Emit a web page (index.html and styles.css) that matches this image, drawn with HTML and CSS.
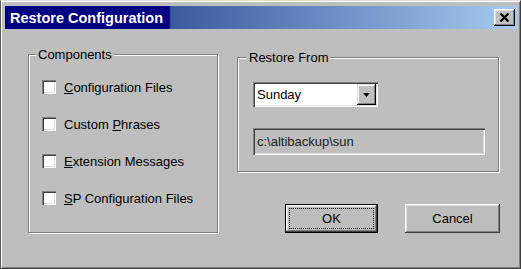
FILE: index.html
```html
<!DOCTYPE html>
<html lang="en">
<head>
  <meta charset="UTF-8">
  <title>Restore Configuration</title>
  <link rel="stylesheet" href="styles.css">
</head>
<body>
  <div class="window">
    <!-- Title bar -->
    <div class="titlebar">
      <span class="title">Restore Configuration</span>
      <button class="close-btn" aria-label="Close">
        <svg width="11" height="9" viewBox="0 0 11 9">
          <path d="M1.5 0.5 L9.5 8.5 M9.5 0.5 L1.5 8.5" stroke="#000" stroke-width="2.2" fill="none"/>
        </svg>
      </button>
    </div>

    <div class="client">
      <!-- Components group -->
      <div class="group components">
        <span class="group-title">Components</span>
        <label class="check-row"><span class="checkbox"></span><span><u>C</u>onfiguration Files</span></label>
        <label class="check-row"><span class="checkbox"></span><span>Custom <u>P</u>hrases</span></label>
        <label class="check-row"><span class="checkbox"></span><span><u>E</u>xtension Messages</span></label>
        <label class="check-row"><span class="checkbox"></span><span><u>S</u>P Configuration Files</span></label>
      </div>

      <div class="right-col">
        <!-- Restore From group -->
        <div class="group restore">
          <span class="group-title">Restore From</span>
          <div class="combo">
            <span class="combo-text">Sunday</span>
            <span class="combo-btn">
              <svg width="7" height="4" viewBox="0 0 7 4"><path d="M0 0 H7 L3.5 4 Z" fill="#000"/></svg>
            </span>
          </div>
          <div class="path-field">c:\altibackup\sun</div>
        </div>

        <!-- Buttons -->
        <div class="buttons">
          <button class="btn btn-default"><span class="focus-rect">OK</span></button>
          <button class="btn">Cancel</button>
        </div>
      </div>
    </div>
  </div>
</body>
</html>
```

FILE: styles.css
```css
/* General */
body {
  margin: 0;
  background: #bebebe;
  font-family: "Liberation Sans", Arial, sans-serif;
  font-size: 13px;
  color: #000;
}

/* Window frame */
.window {
  box-sizing: border-box;
  width: 521px;
  height: 269px;
  background: #bebebe;
  border: 1px solid;
  border-color: #dfdfdf #404040 #404040 #5a5a5a;
  box-shadow: inset 1px 1px #fff, inset -1px -1px #808080;
  padding: 5px 3px 3px 4px;
}

/* Title bar */
.titlebar {
  display: flex;
  align-items: center;
  height: 23px;
  background: linear-gradient(to right, #000080 0, #000080 164px, #3a5a9e 166px, #a6caf0 100%);
  padding-left: 5px;
}

.title {
  color: #fff;
  font-weight: bold;
  font-size: 14.5px;
  line-height: 16px;
}

.close-btn {
  margin-left: auto;
  margin-right: 2px;
  width: 21px;
  height: 17px;
  padding: 0;
  border: none;
  background: #c0c0c0;
  box-shadow: inset -1px -1px #000, inset 1px 1px #fff, inset -2px -2px #808080, inset 2px 2px #dfdfdf;
  display: flex;
  align-items: center;
  justify-content: center;
}

/* Client area */
.client {
  display: flex;
  padding: 25px 0 0 23px;
}

/* Group boxes */
.group {
  position: relative;
  box-sizing: border-box;
  border: 1px solid #808080;
  box-shadow: inset 1px 1px #fff, 1px 1px #fff;
}

.group-title {
  position: absolute;
  top: -8px;
  left: 7px;
  padding: 0 2px;
  background: #bebebe;
  line-height: 15px;
}

.components {
  width: 190px;
  height: 179px;
  padding: 25px 0 0 13px;
  display: flex;
  flex-direction: column;
  gap: 23px;
}

.check-row {
  display: flex;
  align-items: center;
  gap: 8px;
  height: 14px;
}

.checkbox {
  box-sizing: border-box;
  width: 14px;
  height: 14px;
  background: #fff;
  box-shadow: inset 1px 1px #808080, inset 2px 2px #404040, inset -1px -1px #fff, inset -2px -2px #dfdfdf;
}

/* Right column */
.right-col {
  margin-left: 19px;
}

.restore {
  width: 262px;
  height: 115px;
  margin-top: 3px;
  padding: 24px 0 0 15px;
}

.restore .group-title {
  left: 9px;
}

.combo {
  box-sizing: border-box;
  width: 125px;
  height: 25px;
  background: #fff;
  box-shadow: inset 1px 1px #808080, inset 2px 2px #404040, inset -1px -1px #fff, inset -2px -2px #dfdfdf;
  display: flex;
  align-items: center;
  padding: 2px;
}

.combo-text {
  flex: 1;
  padding-left: 2px;
}

.combo-btn {
  box-sizing: border-box;
  width: 19px;
  height: 21px;
  background: #c0c0c0;
  box-shadow: inset -1px -1px #000, inset 1px 1px #dfdfdf, inset -2px -2px #808080, inset 2px 2px #fff;
  display: flex;
  align-items: center;
  justify-content: center;
}

.path-field {
  box-sizing: border-box;
  width: 232px;
  height: 27px;
  margin-top: 21px;
  padding-left: 4px;
  line-height: 27px;
  color: #222;
  box-shadow: inset 1px 1px #808080, inset 2px 2px #404040, inset -1px -1px #fff, inset -2px -2px #dfdfdf;
}

/* Buttons */
.buttons {
  display: flex;
  gap: 27px;
  margin-top: 32px;
  padding-left: 48px;
}

.btn {
  box-sizing: border-box;
  width: 95px;
  height: 29px;
  padding: 0;
  border: none;
  background: #bebebe;
  font: inherit;
  color: #000;
  box-shadow: inset -1px -1px #404040, inset 1px 1px #fff, inset -2px -2px #808080, inset 2px 2px #dfdfdf;
}

.btn-default {
  width: 93px;
  border: 1px solid #000;
  padding: 3px;
  display: flex;
}

.focus-rect {
  flex: 1;
  display: flex;
  align-items: center;
  justify-content: center;
  border: 1px dotted #000;
}
```
